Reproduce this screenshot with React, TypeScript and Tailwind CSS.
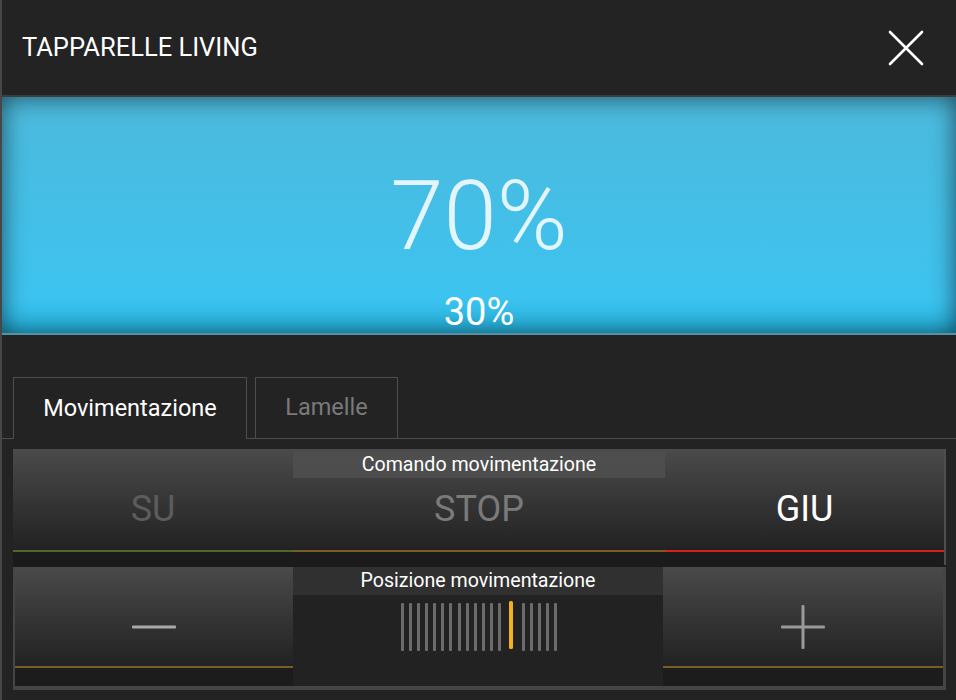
import React from "react";

const grayBars = [0, 8, 16, 24, 32, 40, 48, 57, 65, 73, 81, 89, 97, 121, 129, 137, 145, 153];

function CloseIcon() {
  return (
    <svg width="36" height="36" viewBox="0 0 36 36" fill="none">
      <path d="M2 2L34 34M34 2L2 34" stroke="#ffffff" strokeWidth="2.6" strokeLinecap="round" />
    </svg>
  );
}

function Slider() {
  return (
    <svg width="160" height="52" viewBox="0 0 160 52">
      {grayBars.map((x) => (
        <rect key={x} x={x + 1} y={2} width={3} height={48} rx={1} fill="#6b6b6b" />
      ))}
      <rect x={109} y={0} width={4} height={48} rx={1.5} fill="#f2b11d" />
    </svg>
  );
}

function CmdButton({ label, color, line }: { label: string; color: string; line: string }) {
  return (
    <div className="flex flex-col">
      <div className="h-[101px] flex justify-center pt-[42px] bg-gradient-to-b from-[#4b4b4b] to-[#222222]">
        <span className={`text-[36px] leading-none ${color}`}>{label}</span>
      </div>
      <div className={`h-[2px] ${line}`} />
      <div className="h-[13px] bg-[#1b1b1b]" />
    </div>
  );
}

function StepButton({ children }: { children: React.ReactNode }) {
  return (
    <div className="flex flex-col">
      <div className="h-[99px] flex justify-center pt-[38px] bg-gradient-to-b from-[#4a4a4a] to-[#222222]">
        {children}
      </div>
      <div className="h-[2px] bg-[#7a5c2b]" />
      <div className="h-[18px] bg-[#1c1c1c]" />
    </div>
  );
}

export default function App() {
  return (
    <div className="w-[956px] h-[700px] overflow-hidden bg-[#232323] border-l-2 border-[#474747] flex flex-col font-['Roboto',sans-serif]">
      {/* header */}
      <div className="h-[95px] shrink-0 flex items-center justify-between pl-[20px] pr-[32px]">
        <span className="text-[25.5px] text-white">TAPPARELLE LIVING</span>
        <CloseIcon />
      </div>
      <div className="h-[2px] shrink-0 bg-[#3d3d3d]" />

      {/* level */}
      <div className="h-[238px] shrink-0 flex flex-col items-center pt-[71px] bg-gradient-to-b from-[#4cb9dc] via-[#3cc3ef] via-85% to-[#24b6e2] border-b-2 border-[#5b8fa2] shadow-[inset_0_0_24px_rgba(0,0,0,0.6)]">
        <span className="text-[96px] leading-none font-light text-white/85">70%</span>
        <span className="mt-[29px] text-[38px] leading-none text-white">30%</span>
      </div>

      {/* tabs */}
      <div className="mt-[42px] h-[62px] shrink-0 flex items-end gap-[8px] pl-[11px] border-b border-[#4e4e4e]">
        <div className="w-[234px] h-[62px] -mb-px flex items-center justify-center border border-b-0 border-[#4e4e4e] bg-[#232323] text-[23.5px] text-white">
          Movimentazione
        </div>
        <div className="w-[143px] h-[61px] flex items-center justify-center border border-b-0 border-[#4e4e4e] text-[23.5px] text-[#7a7a7a]">
          Lamelle
        </div>
      </div>

      {/* controls */}
      <div className="mt-[10px] ml-[11px] w-[933px] shrink-0 flex flex-col bg-[#1b1b1b]">
        <div className="grid grid-cols-[280px_372px_279px] border-r-2 border-[#4d4d4d]">
          <CmdButton label="SU" color="text-[#5c5c5c]" line="bg-[#4a6a2c]" />
          <div className="flex flex-col">
            <div className="h-[101px] flex flex-col items-center bg-gradient-to-b from-[#4b4b4b] to-[#222222]">
              <div className="mt-[3px] w-full h-[26px] flex items-center justify-center bg-[#505050]/80 text-[19.6px] text-white">
                Comando movimentazione
              </div>
              <span className="mt-[13px] text-[36px] leading-none text-[#7a7a7a]">STOP</span>
            </div>
            <div className="h-[2px] bg-[#7a5a28]" />
            <div className="h-[13px] bg-[#1b1b1b]" />
          </div>
          <CmdButton label="GIU" color="text-white" line="bg-[#d61f1f]" />
        </div>

        <div className="h-[2px] bg-[#1a1a1a]" />

        <div className="grid grid-cols-[278px_370px_280px] px-[2px] pb-[4px] bg-[#454545] w-[933px]">
          <StepButton>
            <svg width="44" height="44" viewBox="0 0 44 44">
              <rect x="0" y="20.5" width="44" height="3" rx="1" fill="#a9a9a9" />
            </svg>
          </StepButton>
          <div className="flex flex-col bg-[#222222]">
            <div className="h-[28px] flex items-center justify-center bg-[#303030] text-[19.6px] text-white">
              Posizione movimentazione
            </div>
            <div className="pt-[6px] pl-[107px]">
              <Slider />
            </div>
          </div>
          <StepButton>
            <svg width="44" height="44" viewBox="0 0 44 44">
              <rect x="0" y="20.5" width="44" height="3" rx="1" fill="#9a9a9a" />
              <rect x="20.5" y="0" width="3" height="44" rx="1" fill="#9a9a9a" />
            </svg>
          </StepButton>
        </div>
      </div>
    </div>
  );
}
